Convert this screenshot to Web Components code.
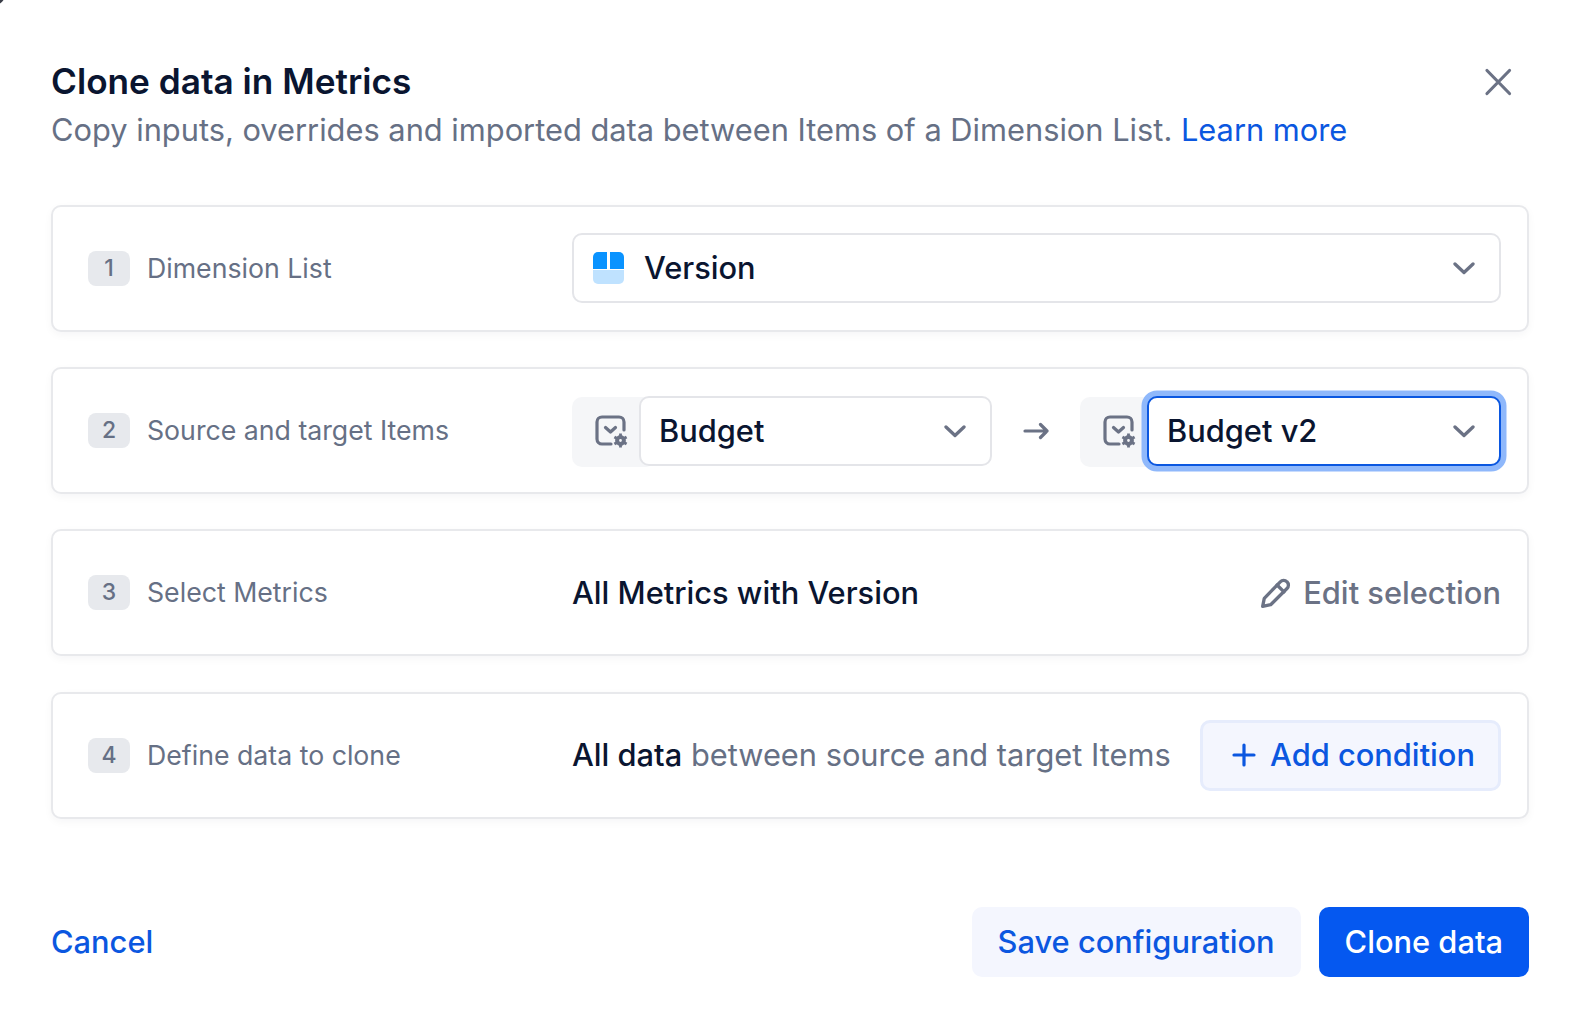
<!DOCTYPE html>
<html>
<head>
<meta charset="utf-8">
<title>Clone data in Metrics</title>
<style>
  html, body { margin: 0; background: #fff; }
  body { font-family: "Inter", "Liberation Sans", sans-serif; color: #0a1530; }
  b { font-weight: 500; color: #0a1530; }
  i { font-style: normal; color: #667085; }
</style>
</head>
<body>
<clone-dialog>
  <step-card num="1" label="Dimension List">
    <select-box text="Version"><version-icon slot="icon"></version-icon></select-box>
  </step-card>
  <step-card num="2" label="Source and target Items">
    <item-picker text="Budget"></item-picker>
    <arrow-icon></arrow-icon>
    <item-picker text="Budget v2" focused></item-picker>
  </step-card>
  <step-card num="3" label="Select Metrics">
    <split-row>
      <span><b>All Metrics with Version</b></span>
      <edit-link slot="end">Edit selection</edit-link>
    </split-row>
  </step-card>
  <step-card num="4" label="Define data to clone">
    <split-row>
      <span><b>All data</b> <i>between source and target Items</i></span>
      <add-button slot="end">Add condition</add-button>
    </split-row>
  </step-card>
</clone-dialog>

<script>
class CloneDialog extends HTMLElement {
  constructor() {
    super();
    this.attachShadow({ mode: "open" });
    this.shadowRoot.innerHTML = /* html */`
    <style>
    :host { display: block; width: 1574px; height: 1020px; box-sizing: border-box; padding: 60px 45px 0 51px; position: relative; overflow: hidden; }
    .corner { position: absolute; left: -22px; top: -22px; width: 28px; height: 28px; border-radius: 50%; background: #3a3d48; }
    header { display: flex; justify-content: space-between; align-items: flex-start; }
    h1 { margin: 0; font: 600 35.2px/42px "Inter", sans-serif; color: #0a1530; }
    p { margin: 7px 0 0; font: 400 30.8px/42px "Inter", sans-serif; color: #667085; }
    a { color: #0b57e0; }
    .close { margin: 8px 17px 0 0; width: 28px; height: 28px; display: block; }
    .steps { display: flex; flex-direction: column; gap: 35.2px; margin-top: 54px; }
    footer { display: flex; align-items: center; gap: 18px; margin-top: 88px; }
    .cancel { font: 500 30.8px/70px "Inter", sans-serif; color: #0b57e0; margin-right: auto; }
    .btn { font: 500 30.8px/70px "Inter", sans-serif; border-radius: 10px; height: 70px; padding: 0 26px; }
    .light { background: #f4f6fe; color: #0b57e0; }
    .solid { background: #0558f0; color: #fff; }
    </style>
    <div class="corner"></div>
    <header>
      <div>
        <h1>Clone data in Metrics</h1>
        <p>Copy inputs, overrides and imported data between Items of a Dimension List. <a>Learn more</a></p>
      </div>
      <svg class="close" viewBox="0 0 28 28" fill="none" stroke="#6b7285" stroke-width="3.2" stroke-linecap="round"><path d="M3 2.500l22.500 23M25.500 2.500l-22.500 23"/></svg>
    </header>
    <div class="steps"><slot></slot></div>
    <footer>
      <span class="cancel">Cancel</span>
      <span class="btn light">Save configuration</span>
      <span class="btn solid">Clone data</span>
    </footer>`;
  }
}

class StepCard extends HTMLElement {
  constructor() {
    super();
    this.attachShadow({ mode: "open" });
    this.shadowRoot.innerHTML = /* html */`
    <style>
    :host { display: grid; grid-template-columns: 484px 1fr; align-items: center; height: 127px; box-sizing: border-box; padding: 0 26px 0 35px; border: 2px solid #e8e9ec; border-radius: 10px; box-shadow: 0 3px 8px rgba(16,24,40,.04); background: #fff; }
    .label { display: flex; align-items: center; gap: 17px; font: 400 26.7px/35px "Inter", sans-serif; color: #667085; }
    .num { width: 42px; height: 35px; border-radius: 8px; background: #e7e9ed; text-align: center; font-weight: 500; font-size: 23px; color: #667085; }
    .body { display: flex; align-items: center; min-width: 0; }
    </style>
    <div class="label"><span class="num"></span><span class="text"></span></div>
    <div class="body"><slot></slot></div>`;
  }
  connectedCallback() {
    this.shadowRoot.querySelector(".num").textContent = this.getAttribute("num");
    this.shadowRoot.querySelector(".text").textContent = this.getAttribute("label");
  }
}

class SelectBox extends HTMLElement {
  static get observedAttributes() { return ["text"]; }
  constructor() {
    super();
    this.attachShadow({ mode: "open" });
    this.shadowRoot.innerHTML = /* html */`
    <style>
    :host { display: flex; flex: 1; align-items: center; height: 70px; box-sizing: border-box; padding: 0 24px 0 18px; background: #fff; border: 2px solid #e4e5e9; border-radius: 10px; font: 500 30.8px/42px "Inter", sans-serif; color: #0a1530; margin-top: -0.5px; }
    :host([focused]) { border-color: #0b57e0; box-shadow: 0 0 0 5.5px #8fb8fb; position: relative; }
    .text { flex: 1; }
    svg { width: 22px; height: 14px; display: block; }
    </style>
    <slot name="icon"></slot>
    <span class="text"></span>
    <svg viewBox="0 0 22 14" fill="none" stroke="#6b7285" stroke-width="3.3" stroke-linecap="round" stroke-linejoin="round"><path d="M2 3l9 8.500 9-8.500"/></svg>`;
  }
  attributeChangedCallback(name, old, value) {
    this.shadowRoot.querySelector(".text").textContent = value;
  }
}

class VersionIcon extends HTMLElement {
  constructor() {
    super();
    this.attachShadow({ mode: "open" });
    this.shadowRoot.innerHTML = /* html */`
    <style>:host { display: block; width: 31px; height: 32px; margin: 0 20px 0 1px; } svg { display: block; }</style>
    <svg width="31" height="32" viewBox="0 0 31 32">
      <path d="M0 17V5a5 5 0 0 1 5-5h9v17z" fill="#0a93ff"/>
      <path d="M17 17V0H26a5 5 0 0 1 5 5v12z" fill="#0a93ff"/>
      <path d="M0 18h31v9a5 5 0 0 1-5 5H5a5 5 0 0 1-5-5z" fill="#bfe2ff"/>
    </svg>`;
  }
}

class ItemPicker extends HTMLElement {
  constructor() {
    super();
    this.attachShadow({ mode: "open" });
    this.shadowRoot.innerHTML = /* html */`
    <style>
    :host { display: flex; flex: 0 0 420px; box-sizing: border-box; align-items: stretch; margin-top: 2px; }
    :host([focused]) { flex-basis: 421px; }
    .pre { flex: 0 0 84px; height: 70px; margin-right: -17px; padding-left: 23px; box-sizing: border-box; display: flex; align-items: center; background: #f5f6f8; border-radius: 10px; }
    svg { display: block; }
    </style>
    <div class="pre">
      <svg width="33" height="33" viewBox="0 0 33 33" fill="none" stroke="#6b7285" stroke-width="3.2" stroke-linecap="round" stroke-linejoin="round">
        <path d="M16 29H7a5 5 0 0 1-5-5V7a5 5 0 0 1 5-5h17a5 5 0 0 1 5 5v8"/>
        <path d="M10.500 12.500l5 4.500 5-4.500"/>
        <circle cx="25.500" cy="25.500" r="3.400" stroke-width="4"/>
        <path stroke-width="2.800" stroke-linecap="butt" d="M25.500 18.500v3M25.500 29.500v3M19.400 22l2.600 1.500M29 27.500l2.600 1.500M19.400 29l2.600-1.500M29 23.500l2.600-1.500"/>
      </svg>
    </div>
    <select-box></select-box>`;
  }
  connectedCallback() {
    const box = this.shadowRoot.querySelector("select-box");
    box.setAttribute("text", this.getAttribute("text"));
    if (this.hasAttribute("focused")) box.setAttribute("focused", "");
  }
}

class ArrowIcon extends HTMLElement {
  constructor() {
    super();
    this.attachShadow({ mode: "open" });
    this.shadowRoot.innerHTML = /* html */`
    <style>:host { display: flex; flex: 1; justify-content: center; } svg { display: block; }</style>
    <svg width="26" height="18" viewBox="0 0 26 18" fill="none" stroke="#6b7285" stroke-width="3.2" stroke-linecap="round" stroke-linejoin="round"><path d="M2 9h22M17.500 2.500l6.500 6.500-6.500 6.500"/></svg>`;
  }
}

class SplitRow extends HTMLElement {
  constructor() {
    super();
    this.attachShadow({ mode: "open" });
    this.shadowRoot.innerHTML = /* html */`
    <style>
    :host { display: flex; flex: 1; align-items: center; justify-content: space-between; font: 400 30.8px/42px "Inter", sans-serif; }
    ::slotted(span) { color: #667085; }
    </style>
    <slot></slot><slot name="end"></slot>`;
  }
}

class EditLink extends HTMLElement {
  constructor() {
    super();
    this.attachShadow({ mode: "open" });
    this.shadowRoot.innerHTML = /* html */`
    <style>
    :host { display: flex; align-items: center; gap: 11px; font: 500 30.8px/42px "Inter", sans-serif; color: #6b7285; }
    svg { display: block; }
    </style>
    <svg width="32" height="32" viewBox="0 0 30 30" fill="none" stroke="#6b7285" stroke-width="3.1" stroke-linecap="round" stroke-linejoin="round">
      <path d="M2.500 27.500l1.500-7.500L19 4.500a4.400 4.400 0 0 1 6.300 0 4.400 4.400 0 0 1 0 6.300L10 26z"/>
      <path d="M16 7.500l6.500 6.500"/>
    </svg>
    <slot></slot>`;
  }
}

class AddButton extends HTMLElement {
  constructor() {
    super();
    this.attachShadow({ mode: "open" });
    this.shadowRoot.innerHTML = /* html */`
    <style>
    :host { display: flex; align-items: center; gap: 14px; height: 71px; box-sizing: border-box; padding: 0 23px 0 29px; border: 3px solid #e6ecfc; border-radius: 10px; background: #f4f6fe; font: 500 30.8px/42px "Inter", sans-serif; color: #0b57e0; }
    svg { display: block; }
    </style>
    <svg width="24" height="24" viewBox="0 0 24 24" fill="none" stroke="#0b57e0" stroke-width="3.2" stroke-linecap="round"><path d="M12 2v20M2 12h20"/></svg>
    <slot></slot>`;
  }
}

customElements.define("select-box", SelectBox);
customElements.define("version-icon", VersionIcon);
customElements.define("item-picker", ItemPicker);
customElements.define("arrow-icon", ArrowIcon);
customElements.define("split-row", SplitRow);
customElements.define("edit-link", EditLink);
customElements.define("add-button", AddButton);
customElements.define("step-card", StepCard);
customElements.define("clone-dialog", CloneDialog);
</script>
</body>
</html>
